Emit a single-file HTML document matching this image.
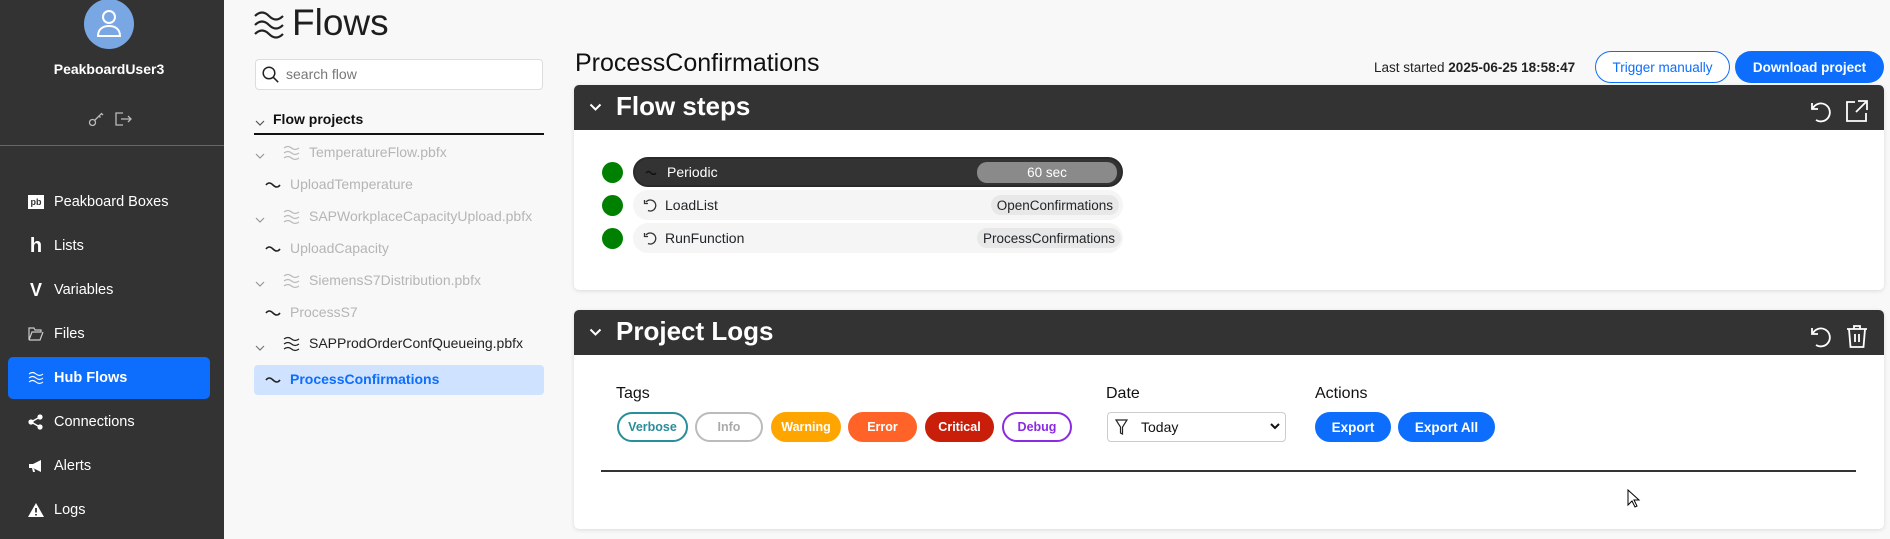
<!DOCTYPE html>
<html><head><meta charset="utf-8">
<style>
*{box-sizing:border-box;margin:0;padding:0}
body{width:1890px;height:539px;overflow:hidden;background:#f8f8f8;font-family:"Liberation Sans",sans-serif;color:#212529;position:relative}
.abs{position:absolute}
#side{left:0;top:0;width:224px;height:539px;background:#333}
.nav{position:absolute;left:0;width:224px;height:20px;color:#fff;font-size:14.5px;display:flex;align-items:center}
.nav .ic{position:absolute;left:28px;width:16px;height:16px;display:flex;align-items:center;justify-content:center}
.nav .t{position:absolute;left:54px}
.tree{position:absolute;font-size:14px;color:#b5b5b5;white-space:nowrap}
.pill{position:absolute;height:30px;border-radius:15px;border:2px solid;font-size:12.5px;font-weight:bold;display:flex;align-items:center;justify-content:center}
.row{position:absolute;left:633px;width:490px;height:30px;border-radius:15px;background:#f5f5f5;font-size:14px;display:flex;align-items:center}
.dot{position:absolute;left:602px;width:21px;height:21px;border-radius:50%;background:#008000}
.badge{position:absolute;right:4px;height:20px;border-radius:10px;background:#e8e8e8;font-size:13.5px;padding:0 6px;display:flex;align-items:center}
</style></head><body>
<div id="side" class="abs">
  <div class="abs" style="left:84px;top:-1px;width:50px;height:50px;border-radius:50%;background:#79a7e3"></div>
  <svg class="abs" style="left:94px;top:6px" width="30" height="36" viewBox="0 0 30 36" fill="none" stroke="#fff" stroke-width="2"><circle cx="15" cy="11" r="6"/><path d="M4 30c0-7 5-10 11-10s11 3 11 10z"/></svg>
  <div class="abs" style="left:0;width:218px;top:61px;text-align:center;color:#fff;font-weight:bold;font-size:14px">PeakboardUser3</div>
  <svg class="abs" style="left:88px;top:111px" width="16" height="16" viewBox="0 0 16 16" fill="none" stroke="#bbb" stroke-width="1.3"><circle cx="4.5" cy="11.5" r="3"/><path d="M6.5 9.5l7-7 1.5 1.5M11 5l1.5 1.5"/></svg>
  <svg class="abs" style="left:114px;top:111px" width="18" height="16" viewBox="0 0 18 16" fill="none" stroke="#bbb" stroke-width="1.3"><path d="M9 2H2v12h7M7 8h10M14 5l3 3-3 3"/></svg>
  <div class="abs" style="left:0;top:145px;width:224px;height:1px;background:#666"></div>
  <div class="nav" style="top:192px"><div class="ic"><div style="width:16px;height:14px;background:#fff;color:#333;font-size:9px;font-weight:bold;text-align:center;line-height:14px">pb</div></div><span class="t">Peakboard Boxes</span></div>
  <div class="nav" style="top:236px"><div class="ic" style="font-weight:900;font-size:20px">h</div><span class="t">Lists</span></div>
  <div class="nav" style="top:280px"><div class="ic" style="font-weight:900;font-size:18px">V</div><span class="t">Variables</span></div>
  <div class="nav" style="top:324px"><div class="ic"><svg width="16" height="14" viewBox="0 0 16 14" fill="none" stroke="#ccc" stroke-width="1.2"><path d="M1 1h5l1 2h6v2H4L1 13zM1 13h11l3-8"/></svg></div><span class="t">Files</span></div>
  <div class="abs" style="left:8px;top:357px;width:202px;height:42px;border-radius:5px;background:#0d6efd"></div>
  <div class="nav" style="top:368px;font-weight:bold"><div class="ic"><svg width="16" height="16" viewBox="0 0 16 16" fill="none" stroke="#fff" stroke-width="1.1"><path d="M1 4q3.5-3 7 0t7 0M1 8q3.5-3 7 0t7 0M1 12q3.5-3 7 0t7 0"/></svg></div><span class="t">Hub Flows</span></div>
  <div class="nav" style="top:412px"><div class="ic"><svg width="16" height="16" viewBox="0 0 16 16" fill="#fff"><circle cx="3" cy="8" r="2.6"/><circle cx="12" cy="3" r="2.6"/><circle cx="12" cy="13" r="2.6"/><path d="M3 8L12 3M3 8l9 5" stroke="#fff" stroke-width="1.5"/></svg></div><span class="t">Connections</span></div>
  <div class="nav" style="top:456px"><div class="ic"><svg width="16" height="16" viewBox="0 0 16 16" fill="#fff"><path d="M1 6h4l8-4v12l-8-4H1zM4 10l1 4h2l-1-4"/></svg></div><span class="t">Alerts</span></div>
  <div class="nav" style="top:500px"><div class="ic"><svg width="16" height="16" viewBox="0 0 16 16"><path d="M8 1L16 15H0z" fill="#fff"/><path d="M8 6v4.5M8 12v1.5" stroke="#333" stroke-width="1.8"/></svg></div><span class="t">Logs</span></div>
</div>

<!-- Flows title -->
<svg class="abs" style="left:254px;top:9px" width="31" height="30" viewBox="0 0 31 30" fill="none" stroke="#222" stroke-width="2.2"><path d="M1 7q7-7 14 0t14 0M1 16q7-7 14 0t14 0M1 25q7-7 14 0t14 0"/></svg>
<div class="abs" style="left:292px;top:2px;font-size:37px;color:#1e1e1e">Flows</div>

<div class="abs" style="left:255px;top:59px;width:288px;height:31px;background:#fff;border:1px solid #ddd;border-radius:4px"></div>
<svg class="abs" style="left:262px;top:66px" width="17" height="17" viewBox="0 0 17 17" fill="none" stroke="#222" stroke-width="1.5"><circle cx="7" cy="7" r="5.8"/><path d="M11.2 11.2l5 5"/></svg>
<div class="abs" style="left:286px;top:66px;font-size:14px;color:#777">search flow</div>

<svg class="abs" style="left:255px;top:119px" width="10" height="8" viewBox="0 0 10 8" fill="none" stroke="#555" stroke-width="1.2"><path d="M1 2l4 4 4-4"/></svg>
<div class="abs" style="left:273px;top:111px;font-size:14px;font-weight:bold;color:#111">Flow projects</div>
<div class="abs" style="left:254px;top:133px;width:290px;height:2px;background:#111"></div>

<div id="treeitems">
<svg class="abs" style="left:255px;top:152px" width="10" height="8" viewBox="0 0 10 8" fill="none" stroke="#999" stroke-width="1.2"><path d="M1 2l4 4 4-4"/></svg>
<svg class="abs" style="left:283px;top:144px" width="17" height="17" viewBox="0 0 17 17" fill="none" stroke="#bbb" stroke-width="1.2"><path d="M1 4q4-3 7.5 0t7.5 0M1 9q4-3 7.5 0t7.5 0M1 14q4-3 7.5 0t7.5 0"/></svg>
<div class="tree" style="left:309px;top:144px">TemperatureFlow.pbfx</div>
<svg class="abs" style="left:265px;top:180px" width="16" height="8" viewBox="0 0 16 8" fill="none" stroke="#222" stroke-width="1.6"><path d="M1 5q3-4 7 0t7 0"/></svg>
<div class="tree" style="left:290px;top:176px">UploadTemperature</div>

<svg class="abs" style="left:255px;top:216px" width="10" height="8" viewBox="0 0 10 8" fill="none" stroke="#999" stroke-width="1.2"><path d="M1 2l4 4 4-4"/></svg>
<svg class="abs" style="left:283px;top:208px" width="17" height="17" viewBox="0 0 17 17" fill="none" stroke="#bbb" stroke-width="1.2"><path d="M1 4q4-3 7.5 0t7.5 0M1 9q4-3 7.5 0t7.5 0M1 14q4-3 7.5 0t7.5 0"/></svg>
<div class="tree" style="left:309px;top:208px">SAPWorkplaceCapacityUpload.pbfx</div>
<svg class="abs" style="left:265px;top:244px" width="16" height="8" viewBox="0 0 16 8" fill="none" stroke="#222" stroke-width="1.6"><path d="M1 5q3-4 7 0t7 0"/></svg>
<div class="tree" style="left:290px;top:240px">UploadCapacity</div>

<svg class="abs" style="left:255px;top:280px" width="10" height="8" viewBox="0 0 10 8" fill="none" stroke="#999" stroke-width="1.2"><path d="M1 2l4 4 4-4"/></svg>
<svg class="abs" style="left:283px;top:272px" width="17" height="17" viewBox="0 0 17 17" fill="none" stroke="#bbb" stroke-width="1.2"><path d="M1 4q4-3 7.5 0t7.5 0M1 9q4-3 7.5 0t7.5 0M1 14q4-3 7.5 0t7.5 0"/></svg>
<div class="tree" style="left:309px;top:272px">SiemensS7Distribution.pbfx</div>
<svg class="abs" style="left:265px;top:308px" width="16" height="8" viewBox="0 0 16 8" fill="none" stroke="#222" stroke-width="1.6"><path d="M1 5q3-4 7 0t7 0"/></svg>
<div class="tree" style="left:290px;top:304px">ProcessS7</div>

<svg class="abs" style="left:255px;top:344px" width="10" height="8" viewBox="0 0 10 8" fill="none" stroke="#777" stroke-width="1.2"><path d="M1 2l4 4 4-4"/></svg>
<svg class="abs" style="left:283px;top:335px" width="17" height="17" viewBox="0 0 17 17" fill="none" stroke="#222" stroke-width="1.2"><path d="M1 4q4-3 7.5 0t7.5 0M1 9q4-3 7.5 0t7.5 0M1 14q4-3 7.5 0t7.5 0"/></svg>
<div class="tree" style="left:309px;top:335px;color:#222">SAPProdOrderConfQueueing.pbfx</div>
<div class="abs" style="left:254px;top:365px;width:290px;height:30px;border-radius:4px;background:#cfe2ff"></div>
<svg class="abs" style="left:265px;top:375px" width="16" height="8" viewBox="0 0 16 8" fill="none" stroke="#222" stroke-width="1.6"><path d="M1 5q3-4 7 0t7 0"/></svg>
<div class="tree" style="left:290px;top:371px;color:#0d6efd;font-weight:bold">ProcessConfirmations</div>
</div>

<!-- Right header -->
<div class="abs" style="left:575px;top:49px;font-size:25px;color:#111">ProcessConfirmations</div>
<div class="abs" style="left:1374px;top:60px;font-size:13.5px;color:#222">Last started <b>2025-06-25 18:58:47</b></div>
<div class="abs" style="left:1595px;top:51px;width:135px;height:32px;border:1px solid #0d6efd;border-radius:16px;background:#fff;color:#0d6efd;font-size:13.5px;display:flex;align-items:center;justify-content:center">Trigger manually</div>
<div class="abs" style="left:1735px;top:51px;width:149px;height:32px;border-radius:16px;background:#0d6efd;color:#fff;font-weight:bold;font-size:13.5px;display:flex;align-items:center;justify-content:center">Download project</div>

<!-- Flow steps card -->
<div class="abs" style="left:574px;top:85px;width:1310px;height:205px;background:#fff;border-radius:5px;box-shadow:0 1px 4px rgba(0,0,0,.12);overflow:hidden">
  <div style="height:45px;background:#333"></div>
</div>
<svg class="abs" style="left:589px;top:103px" width="13" height="9" viewBox="0 0 13 9" fill="none" stroke="#fff" stroke-width="2"><path d="M1.5 1.5l5 5 5-5"/></svg>
<div class="abs" style="left:616px;top:91px;font-size:26px;color:#fff;font-weight:600">Flow steps</div>
<svg class="abs" style="left:1808px;top:100px" width="24" height="24" viewBox="0 0 24 24" fill="none" stroke="#fff" stroke-width="1.8"><path d="M5 8a9 9 0 1 1 3 12"/><path d="M4 3v6h6" stroke-width="1.8"/></svg>
<svg class="abs" style="left:1846px;top:100px" width="22" height="22" viewBox="0 0 22 22" fill="none" stroke="#fff" stroke-width="1.8"><path d="M9 2H1v19h19v-8M12 1h9v9M21 1L10 12"/></svg>

<div class="dot" style="top:162px"></div>
<div class="row" style="top:157px;background:#333;color:#fff;border:2px solid #2a2a2a"><svg style="position:absolute;left:10px" width="12" height="6" viewBox="0 0 12 6" fill="none" stroke="#111" stroke-width="1.4"><path d="M1 4q2.5-3 5 0t5 0"/></svg><span style="position:absolute;left:32px">Periodic</span><div class="badge" style="width:140px;justify-content:center;background:#8a8a8a;color:#fff;height:21px">60 sec</div></div>
<div class="dot" style="top:195px"></div>
<div class="row" style="top:190px"><svg style="position:absolute;left:10px" width="14" height="14" viewBox="0 0 14 14" fill="none" stroke="#333" stroke-width="1.3"><path d="M3 4a5.5 5.5 0 1 1 2 8.5"/><path d="M1.5 2v3.5h3.5"/></svg><span style="position:absolute;left:32px">LoadList</span><div class="badge">OpenConfirmations</div></div>
<div class="dot" style="top:228px"></div>
<div class="row" style="top:223px"><svg style="position:absolute;left:10px" width="14" height="14" viewBox="0 0 14 14" fill="none" stroke="#333" stroke-width="1.3"><path d="M3 4a5.5 5.5 0 1 1 2 8.5"/><path d="M1.5 2v3.5h3.5"/></svg><span style="position:absolute;left:32px">RunFunction</span><div class="badge" style="right:2px">ProcessConfirmations</div></div>

<!-- Project logs card -->
<div class="abs" style="left:574px;top:310px;width:1310px;height:219px;background:#fff;border-radius:5px;box-shadow:0 1px 4px rgba(0,0,0,.12);overflow:hidden">
  <div style="height:45px;background:#333"></div>
</div>
<svg class="abs" style="left:589px;top:328px" width="13" height="9" viewBox="0 0 13 9" fill="none" stroke="#fff" stroke-width="2"><path d="M1.5 1.5l5 5 5-5"/></svg>
<div class="abs" style="left:616px;top:316px;font-size:26px;color:#fff;font-weight:600">Project Logs</div>
<svg class="abs" style="left:1808px;top:325px" width="24" height="24" viewBox="0 0 24 24" fill="none" stroke="#fff" stroke-width="1.8"><path d="M5 8a9 9 0 1 1 3 12"/><path d="M4 3v6h6"/></svg>
<svg class="abs" style="left:1846px;top:324px" width="22" height="24" viewBox="0 0 22 24" fill="none" stroke="#fff" stroke-width="1.8"><path d="M1 5h20M8 5V2h6v3M3 5l1.5 18h13L19 5M9 10v8M13 10v8"/></svg>

<div class="abs" style="left:616px;top:385px;font-size:16px;color:#111">Tags</div>
<div class="pill" style="left:617px;top:412px;width:71px;border-color:#2a8d9a;color:#2a8d9a">Verbose</div>
<div class="pill" style="left:695px;top:412px;width:68px;border-color:#bbb;color:#aaa">Info</div>
<div class="pill" style="left:771px;top:412px;width:70px;border-color:#ffa500;background:#ffa500;color:#fff">Warning</div>
<div class="pill" style="left:848px;top:412px;width:69px;border-color:#ff6327;background:#ff6327;color:#fff">Error</div>
<div class="pill" style="left:925px;top:412px;width:69px;border-color:#c81e0a;background:#c81e0a;color:#fff">Critical</div>
<div class="pill" style="left:1002px;top:412px;width:70px;border-color:#8a2be2;color:#8a2be2">Debug</div>

<div class="abs" style="left:1106px;top:385px;font-size:16px;color:#111">Date</div>
<div class="abs" style="left:1107px;top:412px;width:179px;height:30px;border:1px solid #ccc;border-radius:4px;background:#fff"></div>
<svg class="abs" style="left:1115px;top:419px" width="13" height="16" viewBox="0 0 13 16" fill="none" stroke="#222" stroke-width="1.2"><path d="M1 1h11L7.5 8v7l-2-1V8z"/></svg>
<div class="abs" style="left:1141px;top:419px;font-size:14px;color:#111">Today</div>
<svg class="abs" style="left:1270px;top:423px" width="10" height="7" viewBox="0 0 10 7" fill="none" stroke="#111" stroke-width="2"><path d="M1 1l4 4 4-4"/></svg>

<div class="abs" style="left:1315px;top:385px;font-size:16px;color:#111">Actions</div>
<div class="pill" style="left:1315px;top:412px;width:76px;border-color:#0d6efd;background:#0d6efd;color:#fff;font-size:13.5px">Export</div>
<div class="pill" style="left:1398px;top:412px;width:97px;border-color:#0d6efd;background:#0d6efd;color:#fff;font-size:13.5px">Export All</div>

<div class="abs" style="left:601px;top:470px;width:1255px;height:2px;background:#333"></div>
<svg class="abs" style="left:1627px;top:489px" width="14" height="20" viewBox="0 0 14 20" fill="#fff" stroke="#000" stroke-width="1"><path d="M1 1v15l4-4 3 6 2-1-3-6h5z"/></svg>
</body></html>
